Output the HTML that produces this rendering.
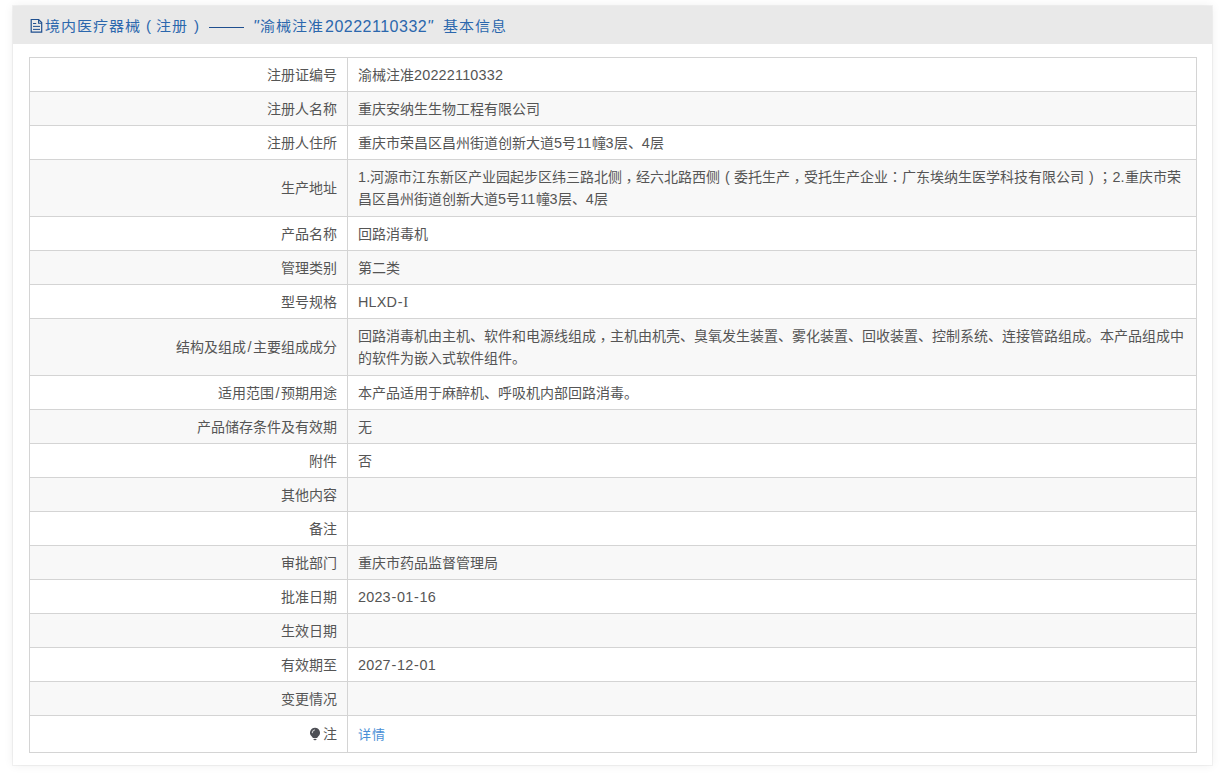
<!DOCTYPE html>
<html lang="zh-CN">
<head>
<meta charset="utf-8">
<style>
html,body{margin:0;padding:0;}
body{width:1229px;height:777px;background:#fff;font-family:"Liberation Sans",sans-serif;overflow:hidden;position:relative;text-spacing-trim:space-all;}
i{font-style:normal;}
.cm{position:relative;top:3.5px;}
.pc{display:inline-block;width:14px;text-align:center;font-weight:normal;}
b{font-weight:normal;}
.n{font-size:14.4px;letter-spacing:0.2px;}
.h{margin:0 0.55px;}
.s{margin:0 1.3px;}
.panel{position:absolute;left:13px;top:6px;width:1199px;height:759px;background:#fff;box-shadow:0 0 0 1px rgba(0,0,0,0.045),0 0 10px rgba(0,0,0,0.07);}
.hd{position:absolute;left:0;top:0;width:1199px;height:38px;background:#e9e9e9;color:#2b67ad;font-size:16px;line-height:38px;white-space:nowrap;}
.hd span{position:absolute;top:1px;line-height:40px;}
.hd .c{font-size:15px;letter-spacing:1px;transform:scaleY(0.93);transform-origin:0 27px;top:0;}
.hd .n{font-size:16px;}
.hd .d{letter-spacing:0.5px;}
.hd .dash{top:20.6px;height:1.2px;background:#1f4f8f;}
.hd .ic{position:absolute;left:17px;top:11.5px;}
table{position:absolute;left:16px;top:51px;border-collapse:collapse;width:1168px;table-layout:fixed;}
td{border:1px solid #d4d4d4;font-size:14px;color:#555;font-weight:350;padding:0;line-height:22px;}
td.l{width:307px;text-align:right;padding-right:10px;}
td.v{padding-left:10px;padding-right:8px;}
tr{height:34px;}
tr.g td{background:#f8f8f8;}
tr.two{height:57px;}
a{color:#4a8fd6;text-decoration:none;font-size:13px;letter-spacing:0.5px;}
</style>
</head>
<body>
<div class="panel">
  <div class="hd"><svg class="ic" width="14" height="16" viewBox="0 0 14 16"><path d="M1.2 14.2V1.5H8.6L11.7 4.6V14.2Z" fill="none" stroke="#1f4f8f" stroke-width="1.2"/><path d="M8.6 1.5V5.3H11.7" fill="none" stroke="#1f4f8f" stroke-width="1.1"/><path d="M3 5.5H6.2M3 8.4H10M3 11.4H10" stroke="#1f4f8f" stroke-width="1"/></svg><span class="c" style="left:32px">境内医疗器械</span><span class="n" style="left:133px;top:0.3px;font-size:15px">(</span><span class="c" style="left:143px">注册</span><span class="n" style="left:181px;top:0.3px;font-size:15px">)</span><span class="dash" style="left:196px;width:35px"></span><span class="n" style="left:240px;font-style:italic">"</span><span class="c" style="left:247px">渝械注准</span><span class="n d" style="left:312px">20222110332</span><span class="n" style="left:414px;font-style:italic">"</span><span class="c" style="left:430px">基本信息</span></div>
  <table>
    <tr><td class="l">注册证编号</td><td class="v">渝械注准<b class="n">20222110332</b></td></tr>
    <tr class="g"><td class="l">注册人名称</td><td class="v">重庆安纳生生物工程有限公司</td></tr>
    <tr><td class="l">注册人住所</td><td class="v">重庆市荣昌区昌州街道创新大道<b class="n">5</b>号<b class="n">11</b>幢<b class="n">3</b>层、<b class="n">4</b>层</td></tr>
    <tr class="g two"><td class="l">生产地址</td><td class="v"><b class="n">1.</b>河源市江东新区产业园起步区纬三路北侧<i lang="zh-TW" class="cm">，</i>经六北路西侧<i class="pc">(</i>委托生产<i lang="zh-TW" class="cm">，</i>受托生产企业<i lang="zh-TW">：</i>广东埃纳生医学科技有限公司<i class="pc">)</i><i lang="zh-TW">；</i><b class="n">2.</b>重庆市荣<br>昌区昌州街道创新大道<b class="n">5</b>号<b class="n">11</b>幢<b class="n">3</b>层、<b class="n">4</b>层</td></tr>
    <tr><td class="l">产品名称</td><td class="v">回路消毒机</td></tr>
    <tr class="g"><td class="l">管理类别</td><td class="v">第二类</td></tr>
    <tr><td class="l">型号规格</td><td class="v"><b class="n">HLXD<b class="h">-</b><b style="font-family:'Liberation Serif',serif;font-size:15px">I</b></b></td></tr>
    <tr class="g two"><td class="l">结构及组成<b class="n s">/</b>主要组成成分</td><td class="v">回路消毒机由主机、软件和电源线组成<i lang="zh-TW" class="cm">，</i>主机由机壳、臭氧发生装置、雾化装置、回收装置、控制系统、连接管路组成。本产品组成中<br>的软件为嵌入式软件组件。</td></tr>
    <tr><td class="l">适用范围<b class="n s">/</b>预期用途</td><td class="v">本产品适用于麻醉机、呼吸机内部回路消毒。</td></tr>
    <tr class="g"><td class="l">产品储存条件及有效期</td><td class="v">无</td></tr>
    <tr><td class="l">附件</td><td class="v">否</td></tr>
    <tr class="g"><td class="l">其他内容</td><td class="v"></td></tr>
    <tr><td class="l">备注</td><td class="v"></td></tr>
    <tr class="g"><td class="l">审批部门</td><td class="v">重庆市药品监督管理局</td></tr>
    <tr><td class="l">批准日期</td><td class="v"><b class="n">2023<b class="h">-</b>01<b class="h">-</b>16</b></td></tr>
    <tr class="g"><td class="l">生效日期</td><td class="v"></td></tr>
    <tr><td class="l">有效期至</td><td class="v"><b class="n">2027<b class="h">-</b>12<b class="h">-</b>01</b></td></tr>
    <tr class="g"><td class="l">变更情况</td><td class="v"></td></tr>
    <tr style="height:37px"><td class="l"><svg width="12" height="14" viewBox="0 0 12 14" style="vertical-align:-2px;margin-right:2px"><path d="M6 0.8A4.9 4.9 0 0 1 9.6 9.1Q8.3 10.4 8.1 11.1H3.9Q3.7 10.4 2.4 9.1A4.9 4.9 0 0 1 6 0.8Z" fill="#4d4f55"/><ellipse cx="6" cy="12.5" rx="1.6" ry="0.75" fill="#4d4f55"/><path d="M3.3 5.6Q3.5 3.6 5.4 2.9" fill="none" stroke="#fff" stroke-opacity="0.75" stroke-width="1.1" stroke-linecap="round"/></svg>注</td><td class="v"><a>详情</a></td></tr>
  </table>
</div>
</body>
</html>
